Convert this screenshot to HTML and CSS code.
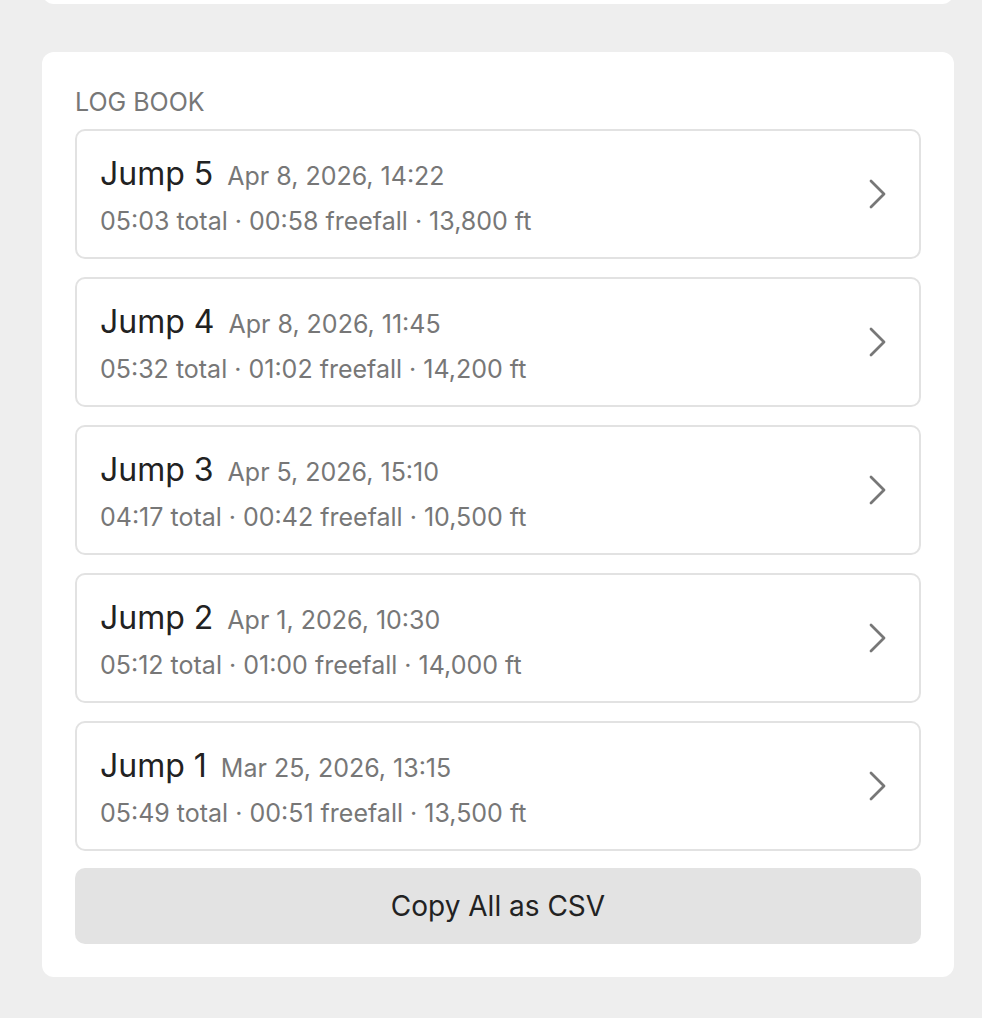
FILE: index.html
```html
<!DOCTYPE html>
<html lang="en">
<head>
    <meta charset="UTF-8">
    <meta name="viewport" content="width=device-width, initial-scale=1.0">
    <title>Log Book</title>
    <link rel="stylesheet" href="styles.css">
</head>
<body>
    <div class="page">
        <div class="card prev-card"></div>

        <div class="card">
            <div class="section-label">LOG BOOK</div>
            <div class="jump-list">
                <div class="jump">
                    <div class="jump-info">
                        <div class="jump-head"><span class="jump-title">Jump 5</span><span class="jump-date">Apr 8, 2026, 14:22</span></div>
                        <div class="jump-meta">05:03 total · 00:58 freefall · 13,800 ft</div>
                    </div>
                    <svg class="chevron" width="20" height="30" viewBox="0 0 20 30"><path d="M4 2 L17 15 L4 28" /></svg>
                </div>
                <div class="jump">
                    <div class="jump-info">
                        <div class="jump-head"><span class="jump-title">Jump 4</span><span class="jump-date">Apr 8, 2026, 11:45</span></div>
                        <div class="jump-meta">05:32 total · 01:02 freefall · 14,200 ft</div>
                    </div>
                    <svg class="chevron" width="20" height="30" viewBox="0 0 20 30"><path d="M4 2 L17 15 L4 28" /></svg>
                </div>
                <div class="jump">
                    <div class="jump-info">
                        <div class="jump-head"><span class="jump-title">Jump 3</span><span class="jump-date">Apr 5, 2026, 15:10</span></div>
                        <div class="jump-meta">04:17 total · 00:42 freefall · 10,500 ft</div>
                    </div>
                    <svg class="chevron" width="20" height="30" viewBox="0 0 20 30"><path d="M4 2 L17 15 L4 28" /></svg>
                </div>
                <div class="jump">
                    <div class="jump-info">
                        <div class="jump-head"><span class="jump-title">Jump 2</span><span class="jump-date">Apr 1, 2026, 10:30</span></div>
                        <div class="jump-meta">05:12 total · 01:00 freefall · 14,000 ft</div>
                    </div>
                    <svg class="chevron" width="20" height="30" viewBox="0 0 20 30"><path d="M4 2 L17 15 L4 28" /></svg>
                </div>
                <div class="jump">
                    <div class="jump-info">
                        <div class="jump-head"><span class="jump-title">Jump 1</span><span class="jump-date">Mar 25, 2026, 13:15</span></div>
                        <div class="jump-meta">05:49 total · 00:51 freefall · 13,500 ft</div>
                    </div>
                    <svg class="chevron" width="20" height="30" viewBox="0 0 20 30"><path d="M4 2 L17 15 L4 28" /></svg>
                </div>
            </div>
            <button class="copy-btn">Copy All as CSV</button>
        </div>
    </div>
</body>
</html>
```

FILE: styles.css
```css
body {
    margin: 0;
    background-color: #eeeeee;
    font-family: Inter, "Noto Sans", sans-serif;
    color: #222;
}

.page {
    padding: 0 28px 42px 42px;
}

.card {
    background-color: #fff;
    border-radius: 12px;
    padding: 35px 33px 33px 33px;
}

/* bottom edge of the card above, scrolled off */
.prev-card {
    height: 40px;
    padding: 0;
    margin-top: -36px;
    margin-bottom: 48px;
}

.section-label {
    font-size: 25px;
    color: #777;
    line-height: 30px;
    margin-bottom: 12px;
}

.jump-list {
    display: flex;
    flex-direction: column;
    gap: 18px;
}

.jump {
    display: flex;
    align-items: center;
    justify-content: space-between;
    height: 126px;
    border: 2px solid #e2e2e2;
    border-radius: 10px;
    padding: 0 32px 0 23px;
}

.jump-info {
    padding-top: 2px;
}

.jump-head {
    display: flex;
    align-items: baseline;
    gap: 14px;
    line-height: 40px;
}

.jump-title {
    font-size: 32px;
    color: #222;
}

.jump-date {
    font-size: 25px;
    color: #777;
}

.jump-meta {
    font-size: 25px;
    line-height: 32px;
    color: #777;
    margin-top: 9px;
}

.chevron path {
    fill: none;
    stroke: #777;
    stroke-width: 2.8;
    stroke-linecap: round;
    stroke-linejoin: round;
}

.copy-btn {
    display: block;
    width: 100%;
    height: 76px;
    margin-top: 17px;
    border: none;
    border-radius: 10px;
    background-color: #e3e3e3;
    font-family: Inter, "Noto Sans", sans-serif;
    font-size: 28px;
    color: #222;
}
```
